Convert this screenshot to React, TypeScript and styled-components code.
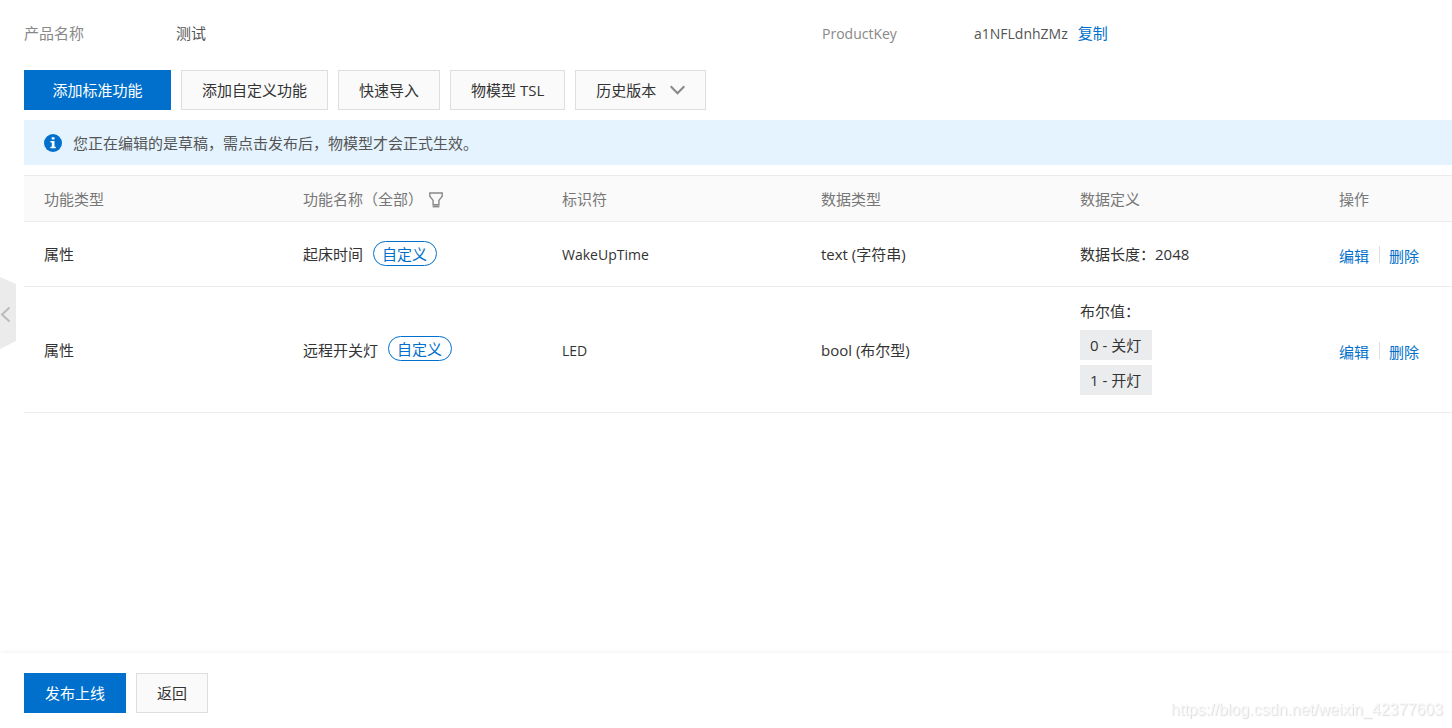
import React from 'react';
import styled, { createGlobalStyle, css } from 'styled-components';

const blue = '#0070cc';
const line = '#ebebeb';

const GlobalStyle = createGlobalStyle`
  * { box-sizing: border-box; }
  body {
    margin: 0;
    background: #fff;
    color: #333;
    font-family: "Segoe UI", "Open Sans", "Noto Sans CJK SC", sans-serif;
    font-size: 15px;
    line-height: 24px;
  }
  button { font: inherit; }
`;

const Page = styled.div`
  display: flex;
  flex-direction: column;
  min-height: 100vh;
`;

const Main = styled.main`
  flex: 1;
  display: flex;
  flex-direction: column;
  padding: 21px 0 20px 24px;
`;

const InfoList = styled.dl`
  display: grid;
  grid-template-columns: 19fr 15fr;
  margin: 0 0 25px;
`;

const InfoItem = styled.div`
  display: flex;
`;

const InfoLabel = styled.dt`
  width: 152px;
  color: #888;
`;

const InfoValue = styled.dd`
  display: flex;
  align-items: baseline;
  gap: 10px;
  height: 24px;
  margin: 0;
  color: #555;
`;

const Latin = styled.span`
  font-size: 14px;
  line-height: 20px;
`;

const TextLink = styled.a`
  color: ${blue};
  text-decoration: none;
`;

const ButtonRow = styled.div`
  display: flex;
  gap: 10px;
`;

const Button = styled.button<{ $primary?: boolean; $wide?: boolean }>`
  display: inline-flex;
  align-items: center;
  justify-content: center;
  gap: 14px;
  height: 40px;
  padding: 0 20px;
  border: 1px solid #dedede;
  border-radius: 0;
  background: #fafafa;
  color: #333;
  white-space: nowrap;
  cursor: pointer;
  ${(p) => p.$primary && css`
    border-color: ${blue};
    background: ${blue};
    color: #fff;
  `}
  ${(p) => p.$wide && css`min-width: 147px;`}
`;

const Notice = styled.div`
  display: flex;
  align-items: center;
  gap: 11px;
  height: 45px;
  margin: 10px 0;
  padding: 0 20px;
  background: #e4f3fe;
  color: #555;
`;

const Table = styled.table`
  width: 100%;
  table-layout: fixed;
  border-collapse: separate;
  border-spacing: 0;
`;

const ActionCol = styled.col`
  width: 133px;
`;

const HeadCell = styled.th`
  height: 47px;
  padding: 0 0 0 20px;
  border-top: 1px solid ${line};
  border-bottom: 1px solid ${line};
  background: #fafafa;
  color: #777;
  font-weight: 400;
  text-align: left;
`;

const Cell = styled.td`
  height: 65px;
  padding: 12px 0 12px 20px;
  border-bottom: 1px solid ${line};
`;

const Inline = styled.div<{ $gap: number }>`
  display: flex;
  align-items: center;
  gap: ${(p) => p.$gap}px;
`;

const FilterButton = styled.button`
  display: flex;
  padding: 2px 0 0;
  border: 0;
  background: none;
  color: #888;
  cursor: pointer;
`;

const Tag = styled.span`
  height: 25px;
  margin-bottom: 2px;
  padding: 0 9px 0 8px;
  border: 1px solid ${blue};
  border-radius: 13px;
  color: ${blue};
`;

const ValueList = styled.ul`
  display: flex;
  flex-direction: column;
  align-items: flex-start;
  gap: 5px;
  margin: 0;
  padding: 7px 0 5px;
  list-style: none;
`;

const ValueChip = styled.li`
  min-width: 72px;
  padding: 3px 10px;
  background: #ebecee;
`;

const Actions = styled.div`
  display: flex;
  align-items: center;
  padding-top: 4px;

  a + a {
    margin-left: 10px;
    padding-left: 10px;
    background: linear-gradient(#dedede, #dedede) 0 2px / 1px 17px no-repeat;
  }
`;

const Footer = styled.footer`
  padding: 20px 24px 15px;
  background: #fff;
  box-shadow: 0 -1px 4px rgba(0, 0, 0, 0.06);
`;

const SideHandle = styled.button`
  position: fixed;
  top: 277px;
  left: 0;
  display: flex;
  padding: 0;
  border: 0;
  background: none;
  cursor: pointer;
`;

const Watermark = styled.div`
  position: fixed;
  right: 9px;
  bottom: 6px;
  color: #f8f8f8;
  font-family: "Liberation Sans", Arial, sans-serif;
  font-size: 16px;
  text-shadow: 1px 1px 1px #dcdcdc;
  pointer-events: none;
`;

const InfoIcon = () => (
  <svg width="18" height="18" viewBox="0 0 18 18" aria-hidden="true">
    <circle cx="9" cy="9" r="9" fill={blue} />
    <path d="M7.7 3.3h2.8v2.3H7.7zM6.4 7h4.1v5.8h1.3v1.5H6.4v-1.5h1.4V8.5H6.4z" fill="#fff" />
  </svg>
);

const ChevronDown = () => (
  <svg width="15" height="10" viewBox="0 0 15 10" fill="none" stroke="#888" strokeWidth="2" aria-hidden="true">
    <path d="M0.7 1.2l6.8 7 6.8-7" />
  </svg>
);

const FilterIcon = () => (
  <svg width="14" height="16" viewBox="0 0 14 16" fill="none" stroke="currentColor" aria-hidden="true">
    <path d="M0.8 1h12.4v3.2L9.9 8.4v4.2H4.1V8.4L0.8 4.2z" strokeWidth="1.4" />
    <path d="M3.6 14.4h6.8" strokeWidth="2" />
  </svg>
);

interface Feature {
  name: string;
  id: string;
  type: string;
  definition: string;
  values?: string[];
}

const features: Feature[] = [
  { name: '起床时间', id: 'WakeUpTime', type: 'text (字符串)', definition: '数据长度：2048' },
  { name: '远程开关灯', id: 'LED', type: 'bool (布尔型)', definition: '布尔值：', values: ['0 - 关灯', '1 - 开灯'] },
];

export default function App() {
  return (
    <Page>
      <GlobalStyle />
      <Main>
        <InfoList>
          <InfoItem>
            <InfoLabel>产品名称</InfoLabel>
            <InfoValue>测试</InfoValue>
          </InfoItem>
          <InfoItem>
            <InfoLabel>
              <Latin>ProductKey</Latin>
            </InfoLabel>
            <InfoValue>
              <Latin>a1NFLdnhZMz</Latin>
              <TextLink href="#copy">复制</TextLink>
            </InfoValue>
          </InfoItem>
        </InfoList>
        <ButtonRow>
          <Button $primary $wide>添加标准功能</Button>
          <Button>添加自定义功能</Button>
          <Button>快速导入</Button>
          <Button>物模型 TSL</Button>
          <Button>
            历史版本
            <ChevronDown />
          </Button>
        </ButtonRow>
        <Notice>
          <InfoIcon />
          <span>您正在编辑的是草稿，需点击发布后，物模型才会正式生效。</span>
        </Notice>
        <Table>
          <colgroup>
            <col span={5} />
            <ActionCol />
          </colgroup>
          <thead>
            <tr>
              <HeadCell>功能类型</HeadCell>
              <HeadCell>
                <Inline $gap={6}>
                  <span>功能名称（全部）</span>
                  <FilterButton aria-label="筛选">
                    <FilterIcon />
                  </FilterButton>
                </Inline>
              </HeadCell>
              <HeadCell>标识符</HeadCell>
              <HeadCell>数据类型</HeadCell>
              <HeadCell>数据定义</HeadCell>
              <HeadCell>操作</HeadCell>
            </tr>
          </thead>
          <tbody>
            {features.map((f) => (
              <tr key={f.id}>
                <Cell>属性</Cell>
                <Cell>
                  <Inline $gap={10}>
                    <span>{f.name}</span>
                    <Tag>自定义</Tag>
                  </Inline>
                </Cell>
                <Cell>
                  <Latin>{f.id}</Latin>
                </Cell>
                <Cell>{f.type}</Cell>
                <Cell>
                  {f.definition}
                  {f.values && (
                    <ValueList>
                      {f.values.map((v) => (
                        <ValueChip key={v}>{v}</ValueChip>
                      ))}
                    </ValueList>
                  )}
                </Cell>
                <Cell>
                  <Actions>
                    <TextLink href="#edit">编辑</TextLink>
                    <TextLink href="#delete">删除</TextLink>
                  </Actions>
                </Cell>
              </tr>
            ))}
          </tbody>
        </Table>
      </Main>
      <Footer>
        <ButtonRow>
          <Button $primary>发布上线</Button>
          <Button>返回</Button>
        </ButtonRow>
      </Footer>
      <SideHandle aria-label="收起侧栏">
        <svg width="16" height="72" viewBox="0 0 16 72" fill="none" aria-hidden="true">
          <path d="M0 0l16 7v57L0 72z" fill="#ebebeb" />
          <path d="M9.5 30.5L2 37.5l7.5 7" stroke="#bbb" strokeWidth="2" />
        </svg>
      </SideHandle>
      <Watermark>https://blog.csdn.net/weixin_42377603</Watermark>
    </Page>
  );
}
